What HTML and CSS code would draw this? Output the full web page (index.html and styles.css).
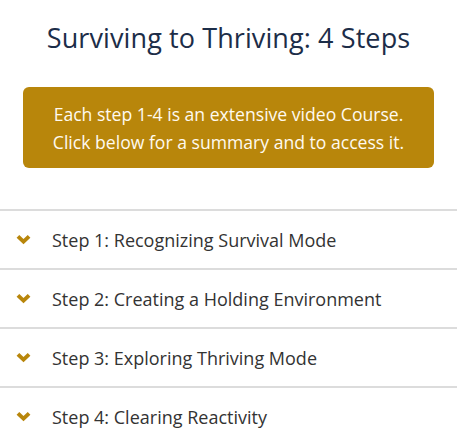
FILE: index.html
```html
<!DOCTYPE html>
<html>
<head>
<meta charset="utf-8">
<link rel="stylesheet" href="styles.css">
</head>
<body>
<div class="page">
  <h1 class="title">Surviving to Thriving: 4 Steps</h1>
  <div class="notice">
    <p>Each step 1-4 is an extensive video Course.<br>Click below for a summary and to access it.</p>
  </div>
  <div class="accordion">
    <div class="item"><svg class="chev" viewBox="0 0 14 10"><path d="M1.8 2 L7 7 L12.2 2" /></svg><span>Step 1: Recognizing Survival Mode</span></div>
    <div class="item"><svg class="chev" viewBox="0 0 14 10"><path d="M1.8 2 L7 7 L12.2 2" /></svg><span>Step 2: Creating a Holding Environment</span></div>
    <div class="item"><svg class="chev" viewBox="0 0 14 10"><path d="M1.8 2 L7 7 L12.2 2" /></svg><span>Step 3: Exploring Thriving Mode</span></div>
    <div class="item"><svg class="chev" viewBox="0 0 14 10"><path d="M1.8 2 L7 7 L12.2 2" /></svg><span>Step 4: Clearing Reactivity</span></div>
  </div>
</div>
</body>
</html>
```
FILE: styles.css
```css
html, body { margin: 0; padding: 0; background: #fff; }
body { font-family: "Open Sans", "Noto Sans", sans-serif; }
.page { width: 457px; }
.title {
  margin: 0;
  padding-top: 18px;
  font-size: 27px;
  font-weight: 400;
  line-height: 40px;
  letter-spacing: 0.1px;
  color: #1c2d48;
  text-align: center;
}
.notice {
  margin: 29px 23px 0;
  height: 81px;
  background: #b8860b;
  border-radius: 6px;
  display: flex;
  align-items: center;
  justify-content: center;
}
.notice p {
  margin: 0;
  color: #fffaf0;
  font-size: 17.6px;
  line-height: 28px;
  text-align: center;
}
.accordion { margin-top: 41px; }
.item {
  border-top: 2px solid #dcdcdc;
  height: 57px;
  display: flex;
  align-items: center;
  padding-left: 16px;
  color: #333;
  font-size: 18px;
}
.chev { width: 15px; height: 11px; margin-right: 21px; }
.chev path { fill: none; stroke: #b8860b; stroke-width: 3.6; stroke-linecap: butt; stroke-linejoin: miter; }
```
